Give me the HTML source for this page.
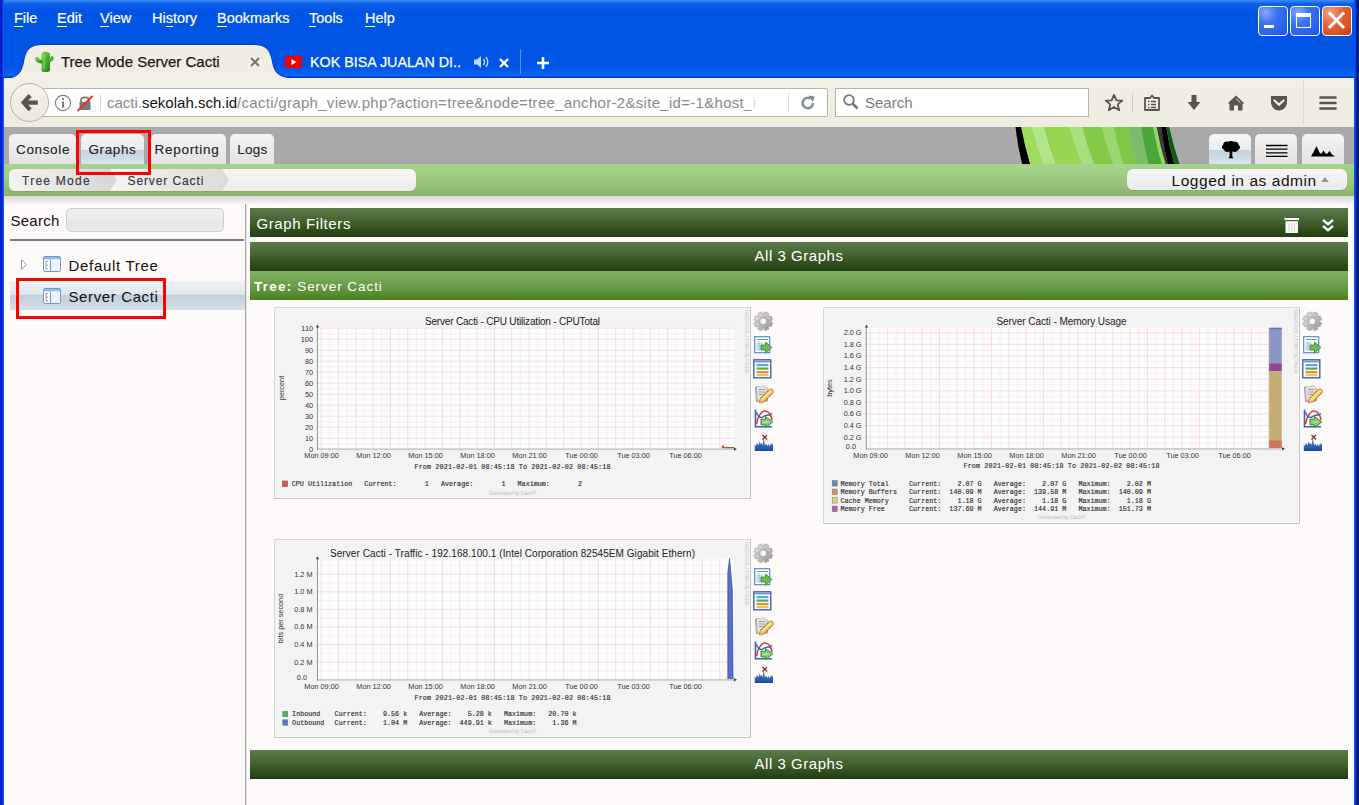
<!DOCTYPE html>
<html><head><meta charset="utf-8">
<style>
*{box-sizing:border-box}
html,body{margin:0;padding:0}
body{width:1359px;height:805px;overflow:hidden;position:relative;background:#0054e3;font-family:"Liberation Sans",sans-serif}
.a{position:absolute}
/* window frame */
#lb{left:0;top:0;width:4px;height:805px;background:linear-gradient(90deg,#0a1ccc 0,#0a1ecc 2px,#0a52e4 3px,#1a66f0 4px)}
#rb{left:1354px;top:0;width:5px;height:805px;background:linear-gradient(90deg,#1050f4 0,#0840ec 1.5px,#0020a8 2.5px,#001878 3.5px,#1a2a58 5px)}
#title{left:0;top:0;width:1359px;height:45px;background:linear-gradient(180deg,#3d8cf7 0,#0a5ee8 4px,#0054e3 12px,#0054e3 100%)}
.menu{top:8.5px;font-size:14.5px;color:#fff;line-height:18px;-webkit-text-stroke:0.2px #fff}
.menu u{text-decoration:none;border-bottom:1px solid #fff}
.wbtn{top:6px;width:30px;height:30px;border:1.5px solid #fff;border-radius:4px;background:radial-gradient(circle at 25% 20%,#88a8f8 0,#3c74f0 35%,#2a62ea 70%,#1c4fd8 100%)}
#tb{left:4px;top:78px;width:1350px;height:49px;background:linear-gradient(180deg,#f2f0e6 0,#eeece1 100%)}
#content{left:4px;top:127px;width:1350px;height:678px;background:#fdfaf9;overflow:hidden}
.ctab{top:134px;height:31px;border-radius:5px 5px 0 0;background:linear-gradient(180deg,#f3f3f3 0,#e9e9e9 60%,#e2e2e2 100%)}
.ctab.sel{background:linear-gradient(180deg,#f4f6f8 0,#e8edf1 50%,#c4d2dc 52%,#d8e4ee 100%)}
.ctt{top:141px;font-size:13.5px;line-height:18px;color:#222;-webkit-text-stroke:0.15px #333}
.bct{top:173px;font-size:12px;line-height:16px;color:#333;-webkit-text-stroke:0.15px #444}
.dbar{left:250px;width:1098px;background:linear-gradient(180deg,#5d7c4c 0,#3f5f2c 50%,#223e0f 100%)}
.btxt{left:250px;width:1098px;text-align:center;font-size:15px;line-height:18px;color:#fff;letter-spacing:0.54px}
.gt{font-family:"Liberation Sans",sans-serif;font-size:10px;fill:#222}
.gl{font-family:"Liberation Sans",sans-serif;font-size:7.3px;fill:#333}
.gm{font-family:"Liberation Mono",monospace;font-size:6.72px;fill:#222;stroke:#555;stroke-width:0.18px}
.gen{font-family:"Liberation Sans",sans-serif;font-size:5px;fill:#bdbdbd}
.rrd{font-family:"Liberation Sans",sans-serif;font-size:5px;fill:#c4c4c4}
.tabtxt{font-size:15px;line-height:18px;-webkit-text-stroke:0.25px currentColor}
</style></head>
<body>
<div id="title" class="a"></div>
<div class="a menu" style="left:14px"><u>F</u>ile</div>
<div class="a menu" style="left:57px"><u>E</u>dit</div>
<div class="a menu" style="left:100px"><u>V</u>iew</div>
<div class="a menu" style="left:152px">Hi<u>s</u>tory</div>
<div class="a menu" style="left:217px"><u>B</u>ookmarks</div>
<div class="a menu" style="left:309px"><u>T</u>ools</div>
<div class="a menu" style="left:365px"><u>H</u>elp</div>
<!-- window buttons -->
<div class="a wbtn" style="left:1258px"><div class="a" style="left:5px;top:18px;width:10px;height:3px;background:#fff"></div></div>
<div class="a wbtn" style="left:1290px"><div class="a" style="left:5px;top:6px;width:15px;height:15px;border:1.5px solid #fff;border-top-width:4px"></div></div>
<div class="a wbtn" style="left:1322px;background:radial-gradient(circle at 25% 20%,#f0a088 0,#e2643c 40%,#d6501c 75%,#b83c10 100%)">
<svg class="a" style="left:0;top:0" width="27" height="27" viewBox="0 0 27 27"><path d="M7 6.5 L20 20 M20 6.5 L7 20" stroke="#fff" stroke-width="3" stroke-linecap="square"/></svg></div>

<!-- tab strip: selected tab -->
<div class="a" style="left:4px;top:66px;width:1350px;height:12px;background:linear-gradient(180deg,#0054e3,#0a64f6 85%,#0038b0 92%,#0038b0 100%)"></div>
<svg class="a" style="left:4px;top:44px" width="300" height="35" viewBox="0 0 300 35">
<path d="M0 35 C14 35 18 28 20 18 C22 6 26 1 38 1 L250 1 C262 1 266 6 268 18 C270 28 274 34 290 34.5" fill="none" stroke="#0038b8" stroke-width="1.6"/><path d="M0 35 C14 35 18 28 20 18 C22 6 26 1 38 1 L250 1 C262 1 266 6 268 18 C270 28 274 34 290 34.5 L290 35 Z" fill="#f1efe5"/>
</svg>
<!-- cactus icon -->
<svg class="a" style="left:34px;top:51px" width="22" height="22" viewBox="0 0 22 22">
<defs><linearGradient id="cg" x1="0" x2="1" y1="0" y2="1"><stop offset="0" stop-color="#8ad84a"/><stop offset="0.6" stop-color="#3ea82a"/><stop offset="1" stop-color="#1f7a18"/></linearGradient></defs>
<path d="M7.5 19.5 L7.5 4 C7.5 1.2 9.5 0.8 11.5 0.8 C14 0.8 16 1.5 16 4.5 L16 19 C16 20.5 14 21 11.5 21 C9 21 7.5 20.8 7.5 19.5 Z" fill="url(#cg)"/>
<path d="M15 11 C17.5 11 19 9.5 19.5 8 C20 6 19 5 18 5 C17 5 16.5 6 16.2 7.2 L15 8 Z" fill="url(#cg)"/>
<path d="M8.5 12.5 C5.5 12.5 2.2 11.5 1.2 9 C0.5 7 1.8 5.5 3.2 5.8 C4.5 6 4.8 7.5 5.5 8.3 C6.2 9 7.2 9 8.5 9 Z" fill="url(#cg)"/>
<path d="M10 3 L10 18" stroke="#a8e878" stroke-width="1" opacity="0.7"/>
</svg>
<div class="a tabtxt" style="left:61px;top:53px;color:#1a1a1a">Tree Mode Server Cacti</div>
<svg class="a" style="left:249px;top:56px" width="12" height="12" viewBox="0 0 12 12"><path d="M2 2 L10 10 M10 2 L2 10" stroke="#7a7a70" stroke-width="2.2"/></svg>
<!-- youtube tab -->
<div class="a" style="left:285px;top:56px;width:17px;height:12px;background:#f20000;border-radius:3px"></div>
<svg class="a" style="left:285px;top:56px" width="17" height="12" viewBox="0 0 17 12"><path d="M6.5 3 L11.5 6 L6.5 9 Z" fill="#fff"/></svg>
<div class="a tabtxt" style="left:310px;top:53.3px;color:#fff;font-size:15px;transform:scaleX(0.953);transform-origin:0 0;white-space:nowrap">KOK BISA JUALAN DI..</div>
<svg class="a" style="left:473px;top:55px" width="17" height="14" viewBox="0 0 17 14"><path d="M1 4.5 L4 4.5 L8 1 L8 13 L4 9.5 L1 9.5 Z" fill="#c8d8f8"/><path d="M10.5 4 Q12.5 7 10.5 10 M13 2 Q16.5 7 13 12" stroke="#c8d8f8" stroke-width="1.4" fill="none"/></svg>
<svg class="a" style="left:498px;top:57px" width="12" height="12" viewBox="0 0 12 12"><path d="M2 2 L10 10 M10 2 L2 10" stroke="#fff" stroke-width="2.4"/></svg>
<div class="a" style="left:520px;top:49px;width:1px;height:25px;background:#5a90f0"></div>
<svg class="a" style="left:536px;top:56px" width="14" height="14" viewBox="0 0 14 14"><path d="M7 1 L7 13 M1 7 L13 7" stroke="#fff" stroke-width="2.6"/></svg>

<div id="tb" class="a"></div>
<!-- url bar -->
<div class="a" style="left:38px;top:88px;width:790px;height:29px;background:#fff;border:1px solid #b9b5a6;border-radius:0 2px 2px 0"></div>
<div class="a" style="left:10px;top:83px;width:39px;height:39px;border-radius:50%;background:linear-gradient(180deg,#f6f4ec,#ebe8dc);border:1px solid #b8b3a0"></div>
<svg class="a" style="left:18px;top:91px" width="22" height="22" viewBox="0 0 22 22"><path d="M3.2 11.5 L10.6 3.2 L13.4 5.9 L9.6 9.8 L19.5 9.8 L19.5 13.4 L9.6 13.4 L13.4 17.2 L10.6 20 Z" fill="#57554b" stroke="#57554b" stroke-width="0.6" stroke-linejoin="round"/></svg>
<svg class="a" style="left:54px;top:94px" width="18" height="18" viewBox="0 0 18 18"><circle cx="9" cy="9" r="7.6" fill="none" stroke="#7c7c7c" stroke-width="1.1"/><rect x="8.1" y="7.5" width="1.8" height="6" fill="#6a6a6a"/><rect x="8.1" y="4.2" width="1.8" height="1.8" fill="#6a6a6a"/></svg>
<svg class="a" style="left:76px;top:94px" width="18" height="18" viewBox="0 0 18 18"><path d="M5 8 L5 6 C5 2.5 13 2.5 13 6 L13 8" stroke="#7a7a7a" stroke-width="1.8" fill="none"/><rect x="3.5" y="8" width="11" height="8" fill="#7a7a7a"/><path d="M1.5 17 L16.5 2" stroke="#e8302a" stroke-width="1.8"/></svg>
<div class="a" style="left:100px;top:94px;width:1px;height:17px;background:#dcd8c8"></div>
<div class="a" style="left:107px;top:93px;width:651px;height:20px;overflow:hidden;white-space:nowrap;font-size:15px;line-height:20px;color:#8a8a8a"><span>cacti.</span><span style="color:#111">sekolah.sch.id</span><span style="letter-spacing:0.3px">/cacti/graph_view.php?action=tree&amp;node=tree_anchor-2&amp;site_id=-1&amp;host_id=-1</span></div>
<div class="a" style="left:748px;top:89px;width:10px;height:27px;background:linear-gradient(90deg,rgba(255,255,255,0),#fff)"></div>
<div class="a" style="left:788px;top:93px;width:1px;height:19px;background:#e4e0d0"></div>
<svg class="a" style="left:799px;top:94px" width="18" height="18" viewBox="0 0 18 18"><path d="M14 9 A5.2 5.2 0 1 1 11.5 4.6" stroke="#7f8a96" stroke-width="2.4" fill="none"/><path d="M9.5 1.5 L15.5 2.5 L14 8 Z" fill="#7f8a96"/></svg>
<!-- search -->
<div class="a" style="left:835px;top:88px;width:254px;height:29px;background:#fff;border:1px solid #b9b5a6"></div>
<svg class="a" style="left:842px;top:93px" width="18" height="18" viewBox="0 0 18 18"><circle cx="7" cy="7" r="4.8" stroke="#777" stroke-width="1.8" fill="none"/><path d="M10.5 10.5 L15.5 15.5" stroke="#777" stroke-width="2.6"/></svg>
<div class="a" style="left:865px;top:93px;font-size:15px;line-height:20px;color:#7a7a7a">Search</div>
<!-- toolbar icons -->
<svg class="a" style="left:1104px;top:93px" width="20" height="20" viewBox="0 0 20 20"><path d="M10 1.8 L12.4 7.3 L18.3 7.6 L13.7 11.4 L15.2 17.3 L10 14 L4.8 17.3 L6.3 11.4 L1.7 7.6 L7.6 7.3 Z" fill="none" stroke="#58564c" stroke-width="1.8" stroke-linejoin="round"/></svg>
<div class="a" style="left:1132px;top:93px;width:1px;height:19px;background:#cfcbb9"></div>
<svg class="a" style="left:1142px;top:93px" width="20" height="20" viewBox="0 0 20 20"><path d="M3 5 L8 5 L10 2.5 L12 5 L17 5 L17 17 L3 17 Z" fill="none" stroke="#58564c" stroke-width="1.8" stroke-linejoin="round"/><path d="M6 8.5 H7.5 M9 8.5 H14 M6 11.5 H7.5 M9 11.5 H14 M6 14.5 H7.5 M9 14.5 H14" stroke="#58564c" stroke-width="1.5"/></svg>
<svg class="a" style="left:1184px;top:93px" width="20" height="20" viewBox="0 0 20 20"><path d="M7.5 2 L12.5 2 L12.5 9 L16.5 9 L10 17 L3.5 9 L7.5 9 Z" fill="#58564c"/></svg>
<svg class="a" style="left:1226px;top:93px" width="20" height="20" viewBox="0 0 20 20"><path d="M10 2.5 L18.5 10.5 L16.5 10.5 L16.5 17.5 L12 17.5 L12 12.5 L8 12.5 L8 17.5 L3.5 17.5 L3.5 10.5 L1.5 10.5 Z" fill="#58564c"/><path d="M10 5.5 L14.5 9.8" stroke="#f0eee4" stroke-width="1"/></svg>
<svg class="a" style="left:1269px;top:93px" width="20" height="20" viewBox="0 0 20 20"><path d="M2 3 L18 3 L18 9 C18 14 14 17.5 10 17.5 C6 17.5 2 14 2 9 Z" fill="#58564c"/><path d="M5.5 7.5 L10 11.8 L14.5 7.5" stroke="#f0eee4" stroke-width="2.2" fill="none" stroke-linecap="round"/></svg>
<div class="a" style="left:1303px;top:81px;width:1px;height:44px;background:#dedacb"></div>
<svg class="a" style="left:1318px;top:93px" width="20" height="20" viewBox="0 0 20 20"><path d="M2.5 4.5 H17.5 M2.5 10 H17.5 M2.5 15.5 H17.5" stroke="#58564c" stroke-width="2.6" stroke-linecap="round"/></svg>
<div id="content" class="a"></div>
<!-- cacti header -->
<div class="a" style="left:4px;top:127px;width:1350px;height:38px;background:#a9a9a9"></div>
<div class="a ctab" style="left:9px;width:67px"></div>
<div class="a ctab sel" style="left:81px;width:63px"></div>
<div class="a ctab" style="left:151px;width:75px"></div>
<div class="a ctab" style="left:230px;width:44px"></div>
<div class="a ctt" style="left:16px;letter-spacing:0.65px">Console</div>
<div class="a ctt" style="left:88.5px;letter-spacing:0.62px">Graphs</div>
<div class="a ctt" style="left:154.5px;letter-spacing:0.72px">Reporting</div>
<div class="a ctt" style="left:237.3px;letter-spacing:0.25px">Logs</div>
<!-- logo -->
<svg class="a" style="left:1010px;top:127px" width="175" height="37" viewBox="0 0 175 37"><path d="M5.5 0 L11.3 0 Q14.6 18.5 20.2 37 L12.1 37 Q7.6 18.5 5.5 0 Z" fill="#000"/><path d="M11.3 0 L21.6 0 Q26.0 18.5 32.7 37 L20.2 37 Q14.6 18.5 11.3 0 Z" fill="#a0dc5c"/><path d="M21.6 0 L34.2 0 Q38.8 18.5 45.9 37 L32.7 37 Q26.0 18.5 21.6 0 Z" fill="#b2e58a"/><path d="M34.2 0 L59.2 0 Q64.2 18.5 71.7 37 L45.9 37 Q38.8 18.5 34.2 0 Z" fill="#95d54f"/><path d="M59.2 0 L72.4 0 Q77.1 18.5 84.2 37 L71.7 37 Q64.2 18.5 59.2 0 Z" fill="#aade7e"/><path d="M72.4 0 L91.5 0 Q96.2 18.5 103.3 37 L84.2 37 Q77.1 18.5 72.4 0 Z" fill="#86cb47"/><path d="M91.5 0 L104.1 0 Q107.6 18.5 113.6 37 L103.3 37 Q96.2 18.5 91.5 0 Z" fill="#9bd76e"/><path d="M104.1 0 L118.8 0 Q121.6 18.5 126.9 37 L113.6 37 Q107.6 18.5 104.1 0 Z" fill="#7fc747"/><path d="M118.8 0 L131.3 0 Q133.8 18.5 138.6 37 L126.9 37 Q121.6 18.5 118.8 0 Z" fill="#7bbb6b"/><path d="M131.3 0 L143.1 0 Q146.3 18.5 151.9 37 L138.6 37 Q133.8 18.5 131.3 0 Z" fill="#4aa63b"/><path d="M143.1 0 L146.7 0 Q149.9 18.5 155.6 37 L151.9 37 Q146.3 18.5 143.1 0 Z" fill="#8fda58"/><path d="M146.7 0 L151.1 0 Q153.3 18.5 157.8 37 L155.6 37 Q149.9 18.5 146.7 0 Z" fill="#3a3a3a"/><path d="M151.1 0 L156.3 0 Q159.1 18.5 164.4 37 L157.8 37 Q153.3 18.5 151.1 0 Z" fill="#000"/><path d="M156.3 0 L159.2 0 Q163.2 18.5 169.5 37 L164.4 37 Q159.1 18.5 156.3 0 Z" fill="#0e5e0e"/></svg>
<!-- view buttons -->
<div class="a ctab sel" style="left:1209px;width:42px"></div>
<div class="a ctab" style="left:1255px;width:42px"></div>
<div class="a ctab" style="left:1302px;width:42px"></div>
<svg class="a" style="left:1220px;top:140px" width="22" height="20" viewBox="0 0 22 20"><path d="M4 9.5 C1.5 9 1.2 6 3.2 5 C3 2.5 5.5 1 8 1.8 C9.5 0.6 12.5 0.6 14 1.8 C16.5 1.2 19 2.8 18.6 5 C20.6 6 20.5 9 18 9.8 C17.5 12 14.5 12.5 13 11.5 L12.3 11.5 L12.3 16.6 L13.6 18.2 L8.5 18.2 L9.6 16.6 L9.6 11.5 L9 11.5 C7.5 12.5 4.5 12 4 9.5 Z" fill="#000"/></svg>
<svg class="a" style="left:1265px;top:143px" width="24" height="16" viewBox="0 0 24 16"><path d="M1 2.5 H22.5 M1 6.2 H22.5 M1 9.8 H22.5 M1 13.4 H22.5" stroke="#000" stroke-width="1.3"/></svg>
<svg class="a" style="left:1310px;top:144px" width="26" height="14" viewBox="0 0 26 14"><path d="M1 12.5 L3.5 8 L6.5 2 L9.5 8.5 L11 10 L13.5 6.5 L16 10 L17.5 9.5 L19.5 7 L22 10.5 L25 12.5 Z" fill="#000"/></svg>
<!-- green bar -->
<div class="a" style="left:4px;top:164px;width:1350px;height:32px;background:linear-gradient(180deg,#a6d48c 0,#9bc97e 50%,#8fb36c 100%)"></div>
<div class="a" style="left:4px;top:196px;width:1350px;height:9px;background:linear-gradient(180deg,#d8d8d8,#fdfaf9)"></div>
<!-- breadcrumb -->
<div class="a" style="left:9px;top:169px;width:407px;height:22px;border-radius:6px;background:linear-gradient(180deg,#f6f6f6,#ececec);box-shadow:0 1px 0 #8aa86a"></div>
<svg class="a" style="left:9px;top:169px" width="230" height="22" viewBox="0 0 230 22">
<defs><linearGradient id="bc1" x1="0" x2="1" y1="0" y2="0"><stop offset="0" stop-color="#f4f4f4"/><stop offset="1" stop-color="#d6d6d6"/></linearGradient>
<linearGradient id="bc2" x1="0" x2="1" y1="0" y2="0"><stop offset="0" stop-color="#f4f4f4"/><stop offset="1" stop-color="#dadada"/></linearGradient></defs>
<path d="M6 0 L101 0 L108 11 L101 22 L6 22 A6 6 0 0 1 0 16 L0 6 A6 6 0 0 1 6 0 Z" fill="url(#bc1)"/>
<path d="M101 0 L213 0 L220 11 L213 22 L101 22 L108 11 Z" fill="url(#bc2)"/>
</svg>
<div class="a bct" style="left:22px;letter-spacing:1.25px">Tree Mode</div>
<div class="a bct" style="left:127.5px;letter-spacing:0.9px">Server Cacti</div>
<!-- logged in -->
<div class="a" style="left:1127px;top:169px;width:220px;height:21px;border-radius:6px;background:linear-gradient(180deg,#f6f6f6,#ebebeb);box-shadow:0 1px 0 #8aa86a"></div>
<div class="a" style="left:1171.5px;top:171.5px;font-size:15.5px;line-height:18px;color:#111;letter-spacing:0.55px">Logged in as admin</div>
<svg class="a" style="left:1320px;top:175px" width="10" height="8" viewBox="0 0 10 8"><path d="M1 7 L5 2 L9 7 Z" fill="#9a9a9a"/></svg>
<!-- red box around Graphs -->
<div class="a" style="left:76px;top:130px;width:75px;height:45px;border:3px solid #f00"></div>

<!-- sidebar -->
<div class="a" style="left:10.5px;top:211.8px;font-size:15px;line-height:18px;color:#111;letter-spacing:0.24px">Search</div>
<div class="a" style="left:66px;top:208px;width:158px;height:24px;border:1px solid #cfcfcf;border-radius:5px;background:linear-gradient(180deg,#f0f0f0 0,#ececec 50%,#e6e6e6 51%,#eaeaea 100%)"></div>
<div class="a" style="left:10px;top:239px;width:234px;height:2px;background:#7c7c7c"></div>
<div class="a" style="left:245px;top:204px;width:2px;height:601px;background:linear-gradient(90deg,#a8a8a8 0,#a8a8a8 50%,#e4e2e2 50%)"></div>
<svg class="a" style="left:20px;top:258px" width="8" height="13" viewBox="0 0 8 13"><path d="M1.5 1.5 L6.5 6.5 L1.5 11.5 Z" fill="none" stroke="#9a9a9a" stroke-width="1"/></svg>
<div class="a" style="left:10px;top:281px;width:235px;height:29px;background:linear-gradient(180deg,#eef2f5 0,#dfe7ec 46%,#c2d0da 49%,#d4dfe7 100%)"></div>
<svg class="a" style="left:43px;top:256px" width="18" height="16" viewBox="0 0 18 16"><rect x="0.5" y="0.5" width="17" height="15" rx="1.5" fill="#fff" stroke="#6f98d0"/><rect x="1" y="1" width="16" height="2.5" fill="#9ab8e4"/><rect x="8.5" y="3.5" width="8" height="11.5" fill="#eef2f8"/><path d="M7.5 3.5 V15" stroke="#6f98d0" stroke-width="1.2"/><path d="M3 5 V13.5 M3 5.5 H5 M3 9 H5 M3 13 H5" stroke="#8a8a8a" stroke-width="0.8"/></svg>
<svg class="a" style="left:43px;top:288px" width="18" height="16" viewBox="0 0 18 16"><rect x="0.5" y="0.5" width="17" height="15" rx="1.5" fill="#fff" stroke="#6f98d0"/><rect x="1" y="1" width="16" height="2.5" fill="#9ab8e4"/><rect x="8.5" y="3.5" width="8" height="11.5" fill="#eef2f8"/><path d="M7.5 3.5 V15" stroke="#6f98d0" stroke-width="1.2"/><path d="M3 5 V13.5 M3 5.5 H5 M3 9 H5 M3 13 H5" stroke="#8a8a8a" stroke-width="0.8"/></svg>
<div class="a" style="left:68.5px;top:256.8px;font-size:15px;line-height:18px;color:#111;letter-spacing:0.69px">Default Tree</div>
<div class="a" style="left:68.5px;top:287.8px;font-size:15px;line-height:18px;color:#111;letter-spacing:0.62px">Server Cacti</div>
<div class="a" style="left:16px;top:278px;width:150px;height:41px;border:3px solid #f00"></div>

<!-- content bars -->
<div class="a dbar" style="top:208px;height:29px"></div>
<div class="a" style="left:256.5px;top:215px;font-size:15px;line-height:18px;color:#fff;letter-spacing:0.6px">Graph Filters</div>
<svg class="a" style="left:1284px;top:217px" width="16" height="18" viewBox="0 0 16 18"><rect x="0.5" y="1" width="14.5" height="2" fill="#fff"/><path d="M1.5 4.2 H14 V16 H1.5 Z" fill="#fff"/><path d="M5 6 V14.5 M7.8 6 V14.5 M10.6 6 V14.5" stroke="#d8d0c0" stroke-width="1.1"/></svg>
<svg class="a" style="left:1320px;top:217px" width="16" height="17" viewBox="0 0 16 17"><path d="M3 3 L8 7.2 L13 3 M3 9 L8 13.2 L13 9" stroke="#fff" stroke-width="2.3" fill="none"/></svg>
<div class="a dbar" style="top:242px;height:29px"></div>
<div class="a btxt" style="top:247px">All 3 Graphs</div>
<div class="a" style="left:250px;top:271px;width:1098px;height:29px;background:linear-gradient(180deg,#85b266 0,#6a9e48 50%,#4a7f1e 100%)"></div>
<div class="a" style="left:254px;top:278.5px;font-size:13.5px;line-height:16px;color:#fff;letter-spacing:0.94px;white-space:pre"><b style="letter-spacing:1.25px">Tree:</b> Server Cacti</div>
<div class="a dbar" style="top:750px;height:29px"></div>
<div class="a btxt" style="top:755px">All 3 Graphs</div>

<!--GRAPHS--><svg class="a" style="left:274px;top:307px" width="477" height="192" viewBox="0 0 477 192"><rect x="0" y="0" width="477" height="192" fill="#f3f3f3"/><path d="M0.5 192 V0.5 H477" stroke="#d6d6d6" stroke-width="1" fill="none"/><path d="M476.5 0 V191.5 H0" stroke="#c4c4c4" stroke-width="1" fill="none"/><path d="M475.5 1 V190.5 H1" stroke="#fcfcfc" stroke-width="1" fill="none"/><rect x="43.5" y="20.3" width="416.5" height="121.89999999999999" fill="#fdfdfd"/><path d="M55.77 20.3 V142.2" stroke="#ebebeb" stroke-width="0.6"/><path d="M73.09 20.3 V142.2" stroke="#ebebeb" stroke-width="0.6"/><path d="M90.42 20.3 V142.2" stroke="#ebebeb" stroke-width="0.6"/><path d="M107.75 20.3 V142.2" stroke="#ebebeb" stroke-width="0.6"/><path d="M125.08 20.3 V142.2" stroke="#ebebeb" stroke-width="0.6"/><path d="M142.41 20.3 V142.2" stroke="#ebebeb" stroke-width="0.6"/><path d="M159.75 20.3 V142.2" stroke="#ebebeb" stroke-width="0.6"/><path d="M177.07 20.3 V142.2" stroke="#ebebeb" stroke-width="0.6"/><path d="M194.40 20.3 V142.2" stroke="#ebebeb" stroke-width="0.6"/><path d="M211.73 20.3 V142.2" stroke="#ebebeb" stroke-width="0.6"/><path d="M229.06 20.3 V142.2" stroke="#ebebeb" stroke-width="0.6"/><path d="M246.39 20.3 V142.2" stroke="#ebebeb" stroke-width="0.6"/><path d="M263.72 20.3 V142.2" stroke="#ebebeb" stroke-width="0.6"/><path d="M281.05 20.3 V142.2" stroke="#ebebeb" stroke-width="0.6"/><path d="M298.38 20.3 V142.2" stroke="#ebebeb" stroke-width="0.6"/><path d="M315.71 20.3 V142.2" stroke="#ebebeb" stroke-width="0.6"/><path d="M333.04 20.3 V142.2" stroke="#ebebeb" stroke-width="0.6"/><path d="M350.37 20.3 V142.2" stroke="#ebebeb" stroke-width="0.6"/><path d="M367.70 20.3 V142.2" stroke="#ebebeb" stroke-width="0.6"/><path d="M385.03 20.3 V142.2" stroke="#ebebeb" stroke-width="0.6"/><path d="M402.36 20.3 V142.2" stroke="#ebebeb" stroke-width="0.6"/><path d="M419.69 20.3 V142.2" stroke="#ebebeb" stroke-width="0.6"/><path d="M437.02 20.3 V142.2" stroke="#ebebeb" stroke-width="0.6"/><path d="M454.35 20.3 V142.2" stroke="#ebebeb" stroke-width="0.6"/><path d="M43.5 136.70 H460" stroke="#ebebeb" stroke-width="0.6"/><path d="M43.5 125.70 H460" stroke="#ebebeb" stroke-width="0.6"/><path d="M43.5 114.70 H460" stroke="#ebebeb" stroke-width="0.6"/><path d="M43.5 103.70 H460" stroke="#ebebeb" stroke-width="0.6"/><path d="M43.5 92.70 H460" stroke="#ebebeb" stroke-width="0.6"/><path d="M43.5 81.70 H460" stroke="#ebebeb" stroke-width="0.6"/><path d="M43.5 70.70 H460" stroke="#ebebeb" stroke-width="0.6"/><path d="M43.5 59.70 H460" stroke="#ebebeb" stroke-width="0.6"/><path d="M43.5 48.70 H460" stroke="#ebebeb" stroke-width="0.6"/><path d="M43.5 37.70 H460" stroke="#ebebeb" stroke-width="0.6"/><path d="M43.5 26.70 H460" stroke="#ebebeb" stroke-width="0.6"/><path d="M47.10 20.3 V144.2" stroke="#f7d2d2" stroke-width="0.8"/><path d="M64.43 20.3 V144.2" stroke="#f7d2d2" stroke-width="0.8"/><path d="M81.76 20.3 V144.2" stroke="#f7d2d2" stroke-width="0.8"/><path d="M99.09 20.3 V144.2" stroke="#f7d2d2" stroke-width="0.8"/><path d="M116.42 20.3 V144.2" stroke="#f7d2d2" stroke-width="0.8"/><path d="M133.75 20.3 V144.2" stroke="#f7d2d2" stroke-width="0.8"/><path d="M151.08 20.3 V144.2" stroke="#f7d2d2" stroke-width="0.8"/><path d="M168.41 20.3 V144.2" stroke="#f7d2d2" stroke-width="0.8"/><path d="M185.74 20.3 V144.2" stroke="#f7d2d2" stroke-width="0.8"/><path d="M203.07 20.3 V144.2" stroke="#f7d2d2" stroke-width="0.8"/><path d="M220.40 20.3 V144.2" stroke="#f7d2d2" stroke-width="0.8"/><path d="M237.73 20.3 V144.2" stroke="#f7d2d2" stroke-width="0.8"/><path d="M255.06 20.3 V144.2" stroke="#f7d2d2" stroke-width="0.8"/><path d="M272.39 20.3 V144.2" stroke="#f7d2d2" stroke-width="0.8"/><path d="M289.72 20.3 V144.2" stroke="#f7d2d2" stroke-width="0.8"/><path d="M307.05 20.3 V144.2" stroke="#f7d2d2" stroke-width="0.8"/><path d="M324.38 20.3 V144.2" stroke="#f7d2d2" stroke-width="0.8"/><path d="M341.71 20.3 V144.2" stroke="#f7d2d2" stroke-width="0.8"/><path d="M359.04 20.3 V144.2" stroke="#f7d2d2" stroke-width="0.8"/><path d="M376.37 20.3 V144.2" stroke="#f7d2d2" stroke-width="0.8"/><path d="M393.70 20.3 V144.2" stroke="#f7d2d2" stroke-width="0.8"/><path d="M411.03 20.3 V144.2" stroke="#f7d2d2" stroke-width="0.8"/><path d="M428.36 20.3 V144.2" stroke="#f7d2d2" stroke-width="0.8"/><path d="M445.69 20.3 V144.2" stroke="#f7d2d2" stroke-width="0.8"/><path d="M41.5 131.20 H460" stroke="#f7d2d2" stroke-width="0.8"/><path d="M41.5 120.20 H460" stroke="#f7d2d2" stroke-width="0.8"/><path d="M41.5 109.20 H460" stroke="#f7d2d2" stroke-width="0.8"/><path d="M41.5 98.20 H460" stroke="#f7d2d2" stroke-width="0.8"/><path d="M41.5 87.20 H460" stroke="#f7d2d2" stroke-width="0.8"/><path d="M41.5 76.20 H460" stroke="#f7d2d2" stroke-width="0.8"/><path d="M41.5 65.20 H460" stroke="#f7d2d2" stroke-width="0.8"/><path d="M41.5 54.20 H460" stroke="#f7d2d2" stroke-width="0.8"/><path d="M41.5 43.20 H460" stroke="#f7d2d2" stroke-width="0.8"/><path d="M41.5 32.20 H460" stroke="#f7d2d2" stroke-width="0.8"/><path d="M41.5 21.20 H460" stroke="#f7d2d2" stroke-width="0.8"/><path d="M448 140.7 L449 139.2 L450 140.89999999999998 H460" stroke="#e0403c" stroke-width="1.6" fill="none"/><path d="M43.5 142.2 H461" stroke="#c9cdcd" stroke-width="1.8"/><path d="M43.5 143.2 V19.5" stroke="#6a8880" stroke-width="0.8"/><path d="M41.9 20.5 L43.5 17.5 L45.1 20.5 Z" fill="#1f4f3a"/><path d="M460 140.6 L463 142.2 L460 143.79999999999998 Z" fill="#1f4f3a"/><text x="238.5" y="17.5" text-anchor="middle" class="gt" textLength="175">Server Cacti - CPU Utilization - CPUTotal</text><text x="39" y="144.50" text-anchor="end" class="gl">0</text><text x="39" y="133.50" text-anchor="end" class="gl">10</text><text x="39" y="122.50" text-anchor="end" class="gl">20</text><text x="39" y="111.50" text-anchor="end" class="gl">30</text><text x="39" y="100.50" text-anchor="end" class="gl">40</text><text x="39" y="89.50" text-anchor="end" class="gl">50</text><text x="39" y="78.50" text-anchor="end" class="gl">60</text><text x="39" y="67.50" text-anchor="end" class="gl">70</text><text x="39" y="56.50" text-anchor="end" class="gl">80</text><text x="39" y="45.50" text-anchor="end" class="gl">90</text><text x="39" y="34.50" text-anchor="end" class="gl">100</text><text x="39" y="23.50" text-anchor="end" class="gl">110</text><text transform="translate(9.5 81) rotate(-90)" text-anchor="middle" class="gl">percent</text><text x="47.60" y="151.3" text-anchor="middle" class="gl">Mon 09:00</text><text x="99.59" y="151.3" text-anchor="middle" class="gl">Mon 12:00</text><text x="151.58" y="151.3" text-anchor="middle" class="gl">Mon 15:00</text><text x="203.57" y="151.3" text-anchor="middle" class="gl">Mon 18:00</text><text x="255.56" y="151.3" text-anchor="middle" class="gl">Mon 21:00</text><text x="307.55" y="151.3" text-anchor="middle" class="gl">Tue 00:00</text><text x="359.54" y="151.3" text-anchor="middle" class="gl">Tue 03:00</text><text x="411.53" y="151.3" text-anchor="middle" class="gl">Tue 06:00</text><text x="238.5" y="162.3" text-anchor="middle" class="gm" textLength="196">From 2021-02-01 08:45:18 To 2021-02-02 08:45:18</text><rect x="8.5" y="174" width="5" height="5.5" fill="#e05050" stroke="#a04040" stroke-width="0.6"/><text x="17.8" y="179.3" class="gm" xml:space="preserve">CPU Utilization   Current:       1   Average:       1   Maximum:       2</text><text x="238.5" y="188" text-anchor="middle" class="gen">Generated by Cacti®</text><text transform="translate(470.5 3) rotate(90)" class="rrd">RRDTOOL / TOBI OETIKER</text></svg><svg class="a" style="left:753px;top:311px" width="21" height="21" viewBox="0 0 21 21"><defs><linearGradient id="gg753311" x1="0" y1="0" x2="1" y2="1"><stop offset="0" stop-color="#e4e4e4"/><stop offset="0.5" stop-color="#c2c2c2"/><stop offset="1" stop-color="#8c8c8c"/></linearGradient></defs><polygon points="16.70,10.13 19.76,11.95 18.15,15.82 14.70,14.95 14.95,14.70 15.82,18.15 11.95,19.76 10.13,16.70 10.47,16.70 8.65,19.76 4.78,18.15 5.65,14.70 5.90,14.95 2.45,15.82 0.84,11.95 3.90,10.13 3.90,10.47 0.84,8.65 2.45,4.78 5.90,5.65 5.65,5.90 4.78,2.45 8.65,0.84 10.47,3.90 10.13,3.90 11.95,0.84 15.82,2.45 14.95,5.90 14.70,5.65 18.15,4.78 19.76,8.65 16.70,10.47" fill="url(#gg753311)" stroke="#9a9a9a" stroke-width="0.6"/><circle cx="10.3" cy="10.3" r="4.3" fill="none" stroke="#a8a8a8" stroke-width="1"/><circle cx="10.3" cy="10.3" r="2.6" fill="#fbf9f8"/></svg><svg class="a" style="left:754px;top:336px" width="19" height="19" viewBox="0 0 19 19"><rect x="0.7" y="0.7" width="15" height="16" fill="#fff" stroke="#5a8ad0" stroke-width="1.2"/><path d="M3 3.5 H14" stroke="#60b060" stroke-width="1"/><rect x="2.5" y="5.5" width="6" height="9" fill="#dce8f6"/><path d="M2.5 8 H9 M2.5 10.5 H9 M2.5 13 H9 M5 5.5 V15" stroke="#9ab4d8" stroke-width="0.6"/><path d="M7 9 H11.5 V6 L18 11.5 L11.5 17 V14 H7 Z" fill="#6cbc50" stroke="#2e8a2a" stroke-width="0.8"/></svg><svg class="a" style="left:753px;top:359px" width="19" height="20" viewBox="0 0 19 20"><rect x="0.8" y="0.8" width="17" height="18" fill="#fff" stroke="#3e64a8" stroke-width="1.4"/><rect x="1.5" y="1.5" width="15.6" height="2" fill="#7a9ad0"/><rect x="3.5" y="5" width="12" height="2.2" fill="#58a8e8"/><rect x="3.5" y="8.5" width="12" height="2.2" fill="#5aa850"/><rect x="3.5" y="12" width="12" height="2.2" fill="#f08a30"/><rect x="3.5" y="15" width="12" height="2.2" fill="#e8c850"/></svg><svg class="a" style="left:754px;top:384px" width="20" height="20" viewBox="0 0 20 20"><path d="M1.5 3 L10.5 2 L13 4 L13.5 17 L2.5 17.5 Z" fill="#c4c4c4" stroke="#8a8a8a" stroke-width="0.8"/><path d="M3 2.5 L11 2 L12.5 3.5 L12.8 15 L3.5 15.5 Z" fill="#e2e2e2"/><path d="M5 5.5 H11 M5 8 H11 M5 10.5 H10" stroke="#9a9a9a" stroke-width="0.9"/><path d="M6.5 14.5 L15.5 5.5 C16.5 4.5 18.5 5 19 6.5 C19.5 7.5 19 8.5 18.5 9 L9.5 18 L5.5 19 Z" fill="#f2dc6a" stroke="#c8883a" stroke-width="1.1" stroke-linejoin="round"/><path d="M7.5 15.5 L16.5 6.5" stroke="#fff2a8" stroke-width="1"/><path d="M5.5 19 L6.5 14.5 L9.5 18 Z" fill="#e8b080"/></svg><svg class="a" style="left:754px;top:408px" width="20" height="21" viewBox="0 0 20 21"><path d="M1.5 1.5 V18.8 H18" stroke="#3a62c0" stroke-width="1.6" fill="none"/><path d="M2.5 16 C4 8 7.5 2.8 11 3 C14.5 3.2 17 6.5 18 12" stroke="#e83a3a" stroke-width="1.6" fill="none"/><path d="M2.2 4 C3.5 7 5 10 7.5 9.5 C10 9 12 6.5 14.5 7 C16 7.3 17 6.5 18 5.5" stroke="#3a62c0" stroke-width="1.4" fill="none"/><path d="M7 11.2 H11.5 V8.5 L18.8 14 L11.5 19.5 V16.8 H7 Z" fill="#8cc878" stroke="#2f8a2a" stroke-width="1" stroke-linejoin="round"/><path d="M8.5 14 H15.5" stroke="#c0e4b0" stroke-width="1"/></svg><svg class="a" style="left:754px;top:434px" width="20" height="18" viewBox="0 0 20 18"><defs><linearGradient id="rt753311" x1="0" y1="0" x2="0" y2="1"><stop offset="0" stop-color="#4a8ae0"/><stop offset="1" stop-color="#1a4a9a"/></linearGradient></defs><path d="M0.8 17 V10.5 L2 12 L3 8.5 L4.2 11.5 L5.5 7.5 L6.5 10 L7.5 9 L8.5 11 L9.8 4 L11 11.5 L12 9.5 L13.5 12 L14.5 10 L16 12.5 L17 9 L18.5 11 L19 8.5 V17 Z" fill="url(#rt753311)"/><path d="M8.5 1 L13 5.5 M13 1 L8.5 5.5" stroke="#8a2a2a" stroke-width="1.3"/></svg><svg class="a" style="left:823px;top:307px" width="477" height="217" viewBox="0 0 477 217"><rect x="0" y="0" width="477" height="217" fill="#f3f3f3"/><path d="M0.5 217 V0.5 H477" stroke="#d6d6d6" stroke-width="1" fill="none"/><path d="M476.5 0 V216.5 H0" stroke="#c4c4c4" stroke-width="1" fill="none"/><path d="M475.5 1 V215.5 H1" stroke="#fcfcfc" stroke-width="1" fill="none"/><rect x="43.4" y="21" width="415.6" height="120.80000000000001" fill="#fdfdfd"/><path d="M55.77 21 V141.8" stroke="#ebebeb" stroke-width="0.6"/><path d="M73.09 21 V141.8" stroke="#ebebeb" stroke-width="0.6"/><path d="M90.42 21 V141.8" stroke="#ebebeb" stroke-width="0.6"/><path d="M107.75 21 V141.8" stroke="#ebebeb" stroke-width="0.6"/><path d="M125.08 21 V141.8" stroke="#ebebeb" stroke-width="0.6"/><path d="M142.41 21 V141.8" stroke="#ebebeb" stroke-width="0.6"/><path d="M159.75 21 V141.8" stroke="#ebebeb" stroke-width="0.6"/><path d="M177.07 21 V141.8" stroke="#ebebeb" stroke-width="0.6"/><path d="M194.40 21 V141.8" stroke="#ebebeb" stroke-width="0.6"/><path d="M211.73 21 V141.8" stroke="#ebebeb" stroke-width="0.6"/><path d="M229.06 21 V141.8" stroke="#ebebeb" stroke-width="0.6"/><path d="M246.39 21 V141.8" stroke="#ebebeb" stroke-width="0.6"/><path d="M263.72 21 V141.8" stroke="#ebebeb" stroke-width="0.6"/><path d="M281.05 21 V141.8" stroke="#ebebeb" stroke-width="0.6"/><path d="M298.38 21 V141.8" stroke="#ebebeb" stroke-width="0.6"/><path d="M315.71 21 V141.8" stroke="#ebebeb" stroke-width="0.6"/><path d="M333.04 21 V141.8" stroke="#ebebeb" stroke-width="0.6"/><path d="M350.37 21 V141.8" stroke="#ebebeb" stroke-width="0.6"/><path d="M367.70 21 V141.8" stroke="#ebebeb" stroke-width="0.6"/><path d="M385.03 21 V141.8" stroke="#ebebeb" stroke-width="0.6"/><path d="M402.36 21 V141.8" stroke="#ebebeb" stroke-width="0.6"/><path d="M419.69 21 V141.8" stroke="#ebebeb" stroke-width="0.6"/><path d="M437.02 21 V141.8" stroke="#ebebeb" stroke-width="0.6"/><path d="M454.35 21 V141.8" stroke="#ebebeb" stroke-width="0.6"/><path d="M43.4 136.00 H459" stroke="#ebebeb" stroke-width="0.6"/><path d="M43.4 124.40 H459" stroke="#ebebeb" stroke-width="0.6"/><path d="M43.4 112.80 H459" stroke="#ebebeb" stroke-width="0.6"/><path d="M43.4 101.20 H459" stroke="#ebebeb" stroke-width="0.6"/><path d="M43.4 89.60 H459" stroke="#ebebeb" stroke-width="0.6"/><path d="M43.4 78.00 H459" stroke="#ebebeb" stroke-width="0.6"/><path d="M43.4 66.40 H459" stroke="#ebebeb" stroke-width="0.6"/><path d="M43.4 54.80 H459" stroke="#ebebeb" stroke-width="0.6"/><path d="M43.4 43.20 H459" stroke="#ebebeb" stroke-width="0.6"/><path d="M43.4 31.60 H459" stroke="#ebebeb" stroke-width="0.6"/><path d="M47.10 21 V143.8" stroke="#f7d2d2" stroke-width="0.8"/><path d="M64.43 21 V143.8" stroke="#f7d2d2" stroke-width="0.8"/><path d="M81.76 21 V143.8" stroke="#f7d2d2" stroke-width="0.8"/><path d="M99.09 21 V143.8" stroke="#f7d2d2" stroke-width="0.8"/><path d="M116.42 21 V143.8" stroke="#f7d2d2" stroke-width="0.8"/><path d="M133.75 21 V143.8" stroke="#f7d2d2" stroke-width="0.8"/><path d="M151.08 21 V143.8" stroke="#f7d2d2" stroke-width="0.8"/><path d="M168.41 21 V143.8" stroke="#f7d2d2" stroke-width="0.8"/><path d="M185.74 21 V143.8" stroke="#f7d2d2" stroke-width="0.8"/><path d="M203.07 21 V143.8" stroke="#f7d2d2" stroke-width="0.8"/><path d="M220.40 21 V143.8" stroke="#f7d2d2" stroke-width="0.8"/><path d="M237.73 21 V143.8" stroke="#f7d2d2" stroke-width="0.8"/><path d="M255.06 21 V143.8" stroke="#f7d2d2" stroke-width="0.8"/><path d="M272.39 21 V143.8" stroke="#f7d2d2" stroke-width="0.8"/><path d="M289.72 21 V143.8" stroke="#f7d2d2" stroke-width="0.8"/><path d="M307.05 21 V143.8" stroke="#f7d2d2" stroke-width="0.8"/><path d="M324.38 21 V143.8" stroke="#f7d2d2" stroke-width="0.8"/><path d="M341.71 21 V143.8" stroke="#f7d2d2" stroke-width="0.8"/><path d="M359.04 21 V143.8" stroke="#f7d2d2" stroke-width="0.8"/><path d="M376.37 21 V143.8" stroke="#f7d2d2" stroke-width="0.8"/><path d="M393.70 21 V143.8" stroke="#f7d2d2" stroke-width="0.8"/><path d="M411.03 21 V143.8" stroke="#f7d2d2" stroke-width="0.8"/><path d="M428.36 21 V143.8" stroke="#f7d2d2" stroke-width="0.8"/><path d="M445.69 21 V143.8" stroke="#f7d2d2" stroke-width="0.8"/><path d="M41.4 130.20 H459" stroke="#f7d2d2" stroke-width="0.8"/><path d="M41.4 118.60 H459" stroke="#f7d2d2" stroke-width="0.8"/><path d="M41.4 107.00 H459" stroke="#f7d2d2" stroke-width="0.8"/><path d="M41.4 95.40 H459" stroke="#f7d2d2" stroke-width="0.8"/><path d="M41.4 83.80 H459" stroke="#f7d2d2" stroke-width="0.8"/><path d="M41.4 72.20 H459" stroke="#f7d2d2" stroke-width="0.8"/><path d="M41.4 60.60 H459" stroke="#f7d2d2" stroke-width="0.8"/><path d="M41.4 49.00 H459" stroke="#f7d2d2" stroke-width="0.8"/><path d="M41.4 37.40 H459" stroke="#f7d2d2" stroke-width="0.8"/><path d="M41.4 25.80 H459" stroke="#f7d2d2" stroke-width="0.8"/><rect x="446.1" y="20.8" width="12.7" height="35.4" fill="#8a96c4"/><rect x="446.1" y="20.8" width="12.7" height="1.4" fill="#6a74b0"/><rect x="446.1" y="56.2" width="12.7" height="8" fill="#94448e"/><rect x="446.1" y="64.2" width="12.7" height="69" fill="#c4ae78"/><rect x="446.1" y="133.2" width="12.7" height="8.6" fill="#c87860"/><path d="M43.4 141.8 H460" stroke="#c9cdcd" stroke-width="1.8"/><path d="M43.4 142.8 V19.5" stroke="#6a8880" stroke-width="0.8"/><path d="M41.8 20.5 L43.4 17.5 L45.0 20.5 Z" fill="#1f4f3a"/><path d="M459 140.20000000000002 L462 141.8 L459 143.4 Z" fill="#1f4f3a"/><text x="238.5" y="17.5" text-anchor="middle" class="gt" textLength="130">Server Cacti - Memory Usage</text><text x="33" y="142.30" text-anchor="end" class="gl">0.0</text><text x="38.5" y="132.50" text-anchor="end" class="gl">0.2 G</text><text x="38.5" y="120.90" text-anchor="end" class="gl">0.4 G</text><text x="38.5" y="109.30" text-anchor="end" class="gl">0.6 G</text><text x="38.5" y="97.70" text-anchor="end" class="gl">0.8 G</text><text x="38.5" y="86.10" text-anchor="end" class="gl">1.0 G</text><text x="38.5" y="74.50" text-anchor="end" class="gl">1.2 G</text><text x="38.5" y="62.90" text-anchor="end" class="gl">1.4 G</text><text x="38.5" y="51.30" text-anchor="end" class="gl">1.6 G</text><text x="38.5" y="39.70" text-anchor="end" class="gl">1.8 G</text><text x="38.5" y="28.10" text-anchor="end" class="gl">2.0 G</text><text transform="translate(9 81) rotate(-90)" text-anchor="middle" class="gl">bytes</text><text x="47.60" y="151" text-anchor="middle" class="gl">Mon 09:00</text><text x="99.59" y="151" text-anchor="middle" class="gl">Mon 12:00</text><text x="151.58" y="151" text-anchor="middle" class="gl">Mon 15:00</text><text x="203.57" y="151" text-anchor="middle" class="gl">Mon 18:00</text><text x="255.56" y="151" text-anchor="middle" class="gl">Mon 21:00</text><text x="307.55" y="151" text-anchor="middle" class="gl">Tue 00:00</text><text x="359.54" y="151" text-anchor="middle" class="gl">Tue 03:00</text><text x="411.53" y="151" text-anchor="middle" class="gl">Tue 06:00</text><text x="238.5" y="161.3" text-anchor="middle" class="gm" textLength="196">From 2021-02-01 08:45:18 To 2021-02-02 08:45:18</text><rect x="9.2" y="173.6" width="5" height="5.5" fill="#6a84b4" stroke="#707070" stroke-width="0.5"/><text x="17.5" y="178.6" class="gm" xml:space="preserve">Memory Total     Current:    2.07 G   Average:    2.07 G   Maximum:    2.02 M</text><rect x="9.2" y="182.1" width="5" height="5.5" fill="#e0905c" stroke="#707070" stroke-width="0.5"/><text x="17.5" y="187.1" class="gm" xml:space="preserve">Memory Buffers   Current:  140.09 M   Average:  139.58 M   Maximum:  140.09 M</text><rect x="9.2" y="190.6" width="5" height="5.5" fill="#e8d070" stroke="#707070" stroke-width="0.5"/><text x="17.5" y="195.6" class="gm" xml:space="preserve">Cache Memory     Current:    1.18 G   Average:    1.18 G   Maximum:    1.18 G</text><rect x="9.2" y="199.1" width="5" height="5.5" fill="#b060a8" stroke="#707070" stroke-width="0.5"/><text x="17.5" y="204.1" class="gm" xml:space="preserve">Memory Free      Current:  137.69 M   Average:  144.91 M   Maximum:  151.73 M</text><text x="238.5" y="212" text-anchor="middle" class="gen">Generated by Cacti®</text><text transform="translate(470.5 3) rotate(90)" class="rrd">RRDTOOL / TOBI OETIKER</text></svg><svg class="a" style="left:1302px;top:311px" width="21" height="21" viewBox="0 0 21 21"><defs><linearGradient id="gg1302311" x1="0" y1="0" x2="1" y2="1"><stop offset="0" stop-color="#e4e4e4"/><stop offset="0.5" stop-color="#c2c2c2"/><stop offset="1" stop-color="#8c8c8c"/></linearGradient></defs><polygon points="16.70,10.13 19.76,11.95 18.15,15.82 14.70,14.95 14.95,14.70 15.82,18.15 11.95,19.76 10.13,16.70 10.47,16.70 8.65,19.76 4.78,18.15 5.65,14.70 5.90,14.95 2.45,15.82 0.84,11.95 3.90,10.13 3.90,10.47 0.84,8.65 2.45,4.78 5.90,5.65 5.65,5.90 4.78,2.45 8.65,0.84 10.47,3.90 10.13,3.90 11.95,0.84 15.82,2.45 14.95,5.90 14.70,5.65 18.15,4.78 19.76,8.65 16.70,10.47" fill="url(#gg1302311)" stroke="#9a9a9a" stroke-width="0.6"/><circle cx="10.3" cy="10.3" r="4.3" fill="none" stroke="#a8a8a8" stroke-width="1"/><circle cx="10.3" cy="10.3" r="2.6" fill="#fbf9f8"/></svg><svg class="a" style="left:1303px;top:336px" width="19" height="19" viewBox="0 0 19 19"><rect x="0.7" y="0.7" width="15" height="16" fill="#fff" stroke="#5a8ad0" stroke-width="1.2"/><path d="M3 3.5 H14" stroke="#60b060" stroke-width="1"/><rect x="2.5" y="5.5" width="6" height="9" fill="#dce8f6"/><path d="M2.5 8 H9 M2.5 10.5 H9 M2.5 13 H9 M5 5.5 V15" stroke="#9ab4d8" stroke-width="0.6"/><path d="M7 9 H11.5 V6 L18 11.5 L11.5 17 V14 H7 Z" fill="#6cbc50" stroke="#2e8a2a" stroke-width="0.8"/></svg><svg class="a" style="left:1302px;top:359px" width="19" height="20" viewBox="0 0 19 20"><rect x="0.8" y="0.8" width="17" height="18" fill="#fff" stroke="#3e64a8" stroke-width="1.4"/><rect x="1.5" y="1.5" width="15.6" height="2" fill="#7a9ad0"/><rect x="3.5" y="5" width="12" height="2.2" fill="#58a8e8"/><rect x="3.5" y="8.5" width="12" height="2.2" fill="#5aa850"/><rect x="3.5" y="12" width="12" height="2.2" fill="#f08a30"/><rect x="3.5" y="15" width="12" height="2.2" fill="#e8c850"/></svg><svg class="a" style="left:1303px;top:384px" width="20" height="20" viewBox="0 0 20 20"><path d="M1.5 3 L10.5 2 L13 4 L13.5 17 L2.5 17.5 Z" fill="#c4c4c4" stroke="#8a8a8a" stroke-width="0.8"/><path d="M3 2.5 L11 2 L12.5 3.5 L12.8 15 L3.5 15.5 Z" fill="#e2e2e2"/><path d="M5 5.5 H11 M5 8 H11 M5 10.5 H10" stroke="#9a9a9a" stroke-width="0.9"/><path d="M6.5 14.5 L15.5 5.5 C16.5 4.5 18.5 5 19 6.5 C19.5 7.5 19 8.5 18.5 9 L9.5 18 L5.5 19 Z" fill="#f2dc6a" stroke="#c8883a" stroke-width="1.1" stroke-linejoin="round"/><path d="M7.5 15.5 L16.5 6.5" stroke="#fff2a8" stroke-width="1"/><path d="M5.5 19 L6.5 14.5 L9.5 18 Z" fill="#e8b080"/></svg><svg class="a" style="left:1303px;top:408px" width="20" height="21" viewBox="0 0 20 21"><path d="M1.5 1.5 V18.8 H18" stroke="#3a62c0" stroke-width="1.6" fill="none"/><path d="M2.5 16 C4 8 7.5 2.8 11 3 C14.5 3.2 17 6.5 18 12" stroke="#e83a3a" stroke-width="1.6" fill="none"/><path d="M2.2 4 C3.5 7 5 10 7.5 9.5 C10 9 12 6.5 14.5 7 C16 7.3 17 6.5 18 5.5" stroke="#3a62c0" stroke-width="1.4" fill="none"/><path d="M7 11.2 H11.5 V8.5 L18.8 14 L11.5 19.5 V16.8 H7 Z" fill="#8cc878" stroke="#2f8a2a" stroke-width="1" stroke-linejoin="round"/><path d="M8.5 14 H15.5" stroke="#c0e4b0" stroke-width="1"/></svg><svg class="a" style="left:1303px;top:434px" width="20" height="18" viewBox="0 0 20 18"><defs><linearGradient id="rt1302311" x1="0" y1="0" x2="0" y2="1"><stop offset="0" stop-color="#4a8ae0"/><stop offset="1" stop-color="#1a4a9a"/></linearGradient></defs><path d="M0.8 17 V10.5 L2 12 L3 8.5 L4.2 11.5 L5.5 7.5 L6.5 10 L7.5 9 L8.5 11 L9.8 4 L11 11.5 L12 9.5 L13.5 12 L14.5 10 L16 12.5 L17 9 L18.5 11 L19 8.5 V17 Z" fill="url(#rt1302311)"/><path d="M8.5 1 L13 5.5 M13 1 L8.5 5.5" stroke="#8a2a2a" stroke-width="1.3"/></svg><svg class="a" style="left:274px;top:539px" width="477" height="199" viewBox="0 0 477 199"><rect x="0" y="0" width="477" height="199" fill="#f3f3f3"/><path d="M0.5 199 V0.5 H477" stroke="#d6d6d6" stroke-width="1" fill="none"/><path d="M476.5 0 V198.5 H0" stroke="#c4c4c4" stroke-width="1" fill="none"/><path d="M475.5 1 V197.5 H1" stroke="#fcfcfc" stroke-width="1" fill="none"/><rect x="43.5" y="20.3" width="416.5" height="120.50000000000001" fill="#fdfdfd"/><path d="M55.77 20.3 V140.8" stroke="#ebebeb" stroke-width="0.6"/><path d="M73.09 20.3 V140.8" stroke="#ebebeb" stroke-width="0.6"/><path d="M90.42 20.3 V140.8" stroke="#ebebeb" stroke-width="0.6"/><path d="M107.75 20.3 V140.8" stroke="#ebebeb" stroke-width="0.6"/><path d="M125.08 20.3 V140.8" stroke="#ebebeb" stroke-width="0.6"/><path d="M142.41 20.3 V140.8" stroke="#ebebeb" stroke-width="0.6"/><path d="M159.75 20.3 V140.8" stroke="#ebebeb" stroke-width="0.6"/><path d="M177.07 20.3 V140.8" stroke="#ebebeb" stroke-width="0.6"/><path d="M194.40 20.3 V140.8" stroke="#ebebeb" stroke-width="0.6"/><path d="M211.73 20.3 V140.8" stroke="#ebebeb" stroke-width="0.6"/><path d="M229.06 20.3 V140.8" stroke="#ebebeb" stroke-width="0.6"/><path d="M246.39 20.3 V140.8" stroke="#ebebeb" stroke-width="0.6"/><path d="M263.72 20.3 V140.8" stroke="#ebebeb" stroke-width="0.6"/><path d="M281.05 20.3 V140.8" stroke="#ebebeb" stroke-width="0.6"/><path d="M298.38 20.3 V140.8" stroke="#ebebeb" stroke-width="0.6"/><path d="M315.71 20.3 V140.8" stroke="#ebebeb" stroke-width="0.6"/><path d="M333.04 20.3 V140.8" stroke="#ebebeb" stroke-width="0.6"/><path d="M350.37 20.3 V140.8" stroke="#ebebeb" stroke-width="0.6"/><path d="M367.70 20.3 V140.8" stroke="#ebebeb" stroke-width="0.6"/><path d="M385.03 20.3 V140.8" stroke="#ebebeb" stroke-width="0.6"/><path d="M402.36 20.3 V140.8" stroke="#ebebeb" stroke-width="0.6"/><path d="M419.69 20.3 V140.8" stroke="#ebebeb" stroke-width="0.6"/><path d="M437.02 20.3 V140.8" stroke="#ebebeb" stroke-width="0.6"/><path d="M454.35 20.3 V140.8" stroke="#ebebeb" stroke-width="0.6"/><path d="M43.5 132.00 H460" stroke="#ebebeb" stroke-width="0.6"/><path d="M43.5 114.40 H460" stroke="#ebebeb" stroke-width="0.6"/><path d="M43.5 96.80 H460" stroke="#ebebeb" stroke-width="0.6"/><path d="M43.5 79.20 H460" stroke="#ebebeb" stroke-width="0.6"/><path d="M43.5 61.60 H460" stroke="#ebebeb" stroke-width="0.6"/><path d="M43.5 44.00 H460" stroke="#ebebeb" stroke-width="0.6"/><path d="M43.5 26.40 H460" stroke="#ebebeb" stroke-width="0.6"/><path d="M47.10 20.3 V142.8" stroke="#f7d2d2" stroke-width="0.8"/><path d="M64.43 20.3 V142.8" stroke="#f7d2d2" stroke-width="0.8"/><path d="M81.76 20.3 V142.8" stroke="#f7d2d2" stroke-width="0.8"/><path d="M99.09 20.3 V142.8" stroke="#f7d2d2" stroke-width="0.8"/><path d="M116.42 20.3 V142.8" stroke="#f7d2d2" stroke-width="0.8"/><path d="M133.75 20.3 V142.8" stroke="#f7d2d2" stroke-width="0.8"/><path d="M151.08 20.3 V142.8" stroke="#f7d2d2" stroke-width="0.8"/><path d="M168.41 20.3 V142.8" stroke="#f7d2d2" stroke-width="0.8"/><path d="M185.74 20.3 V142.8" stroke="#f7d2d2" stroke-width="0.8"/><path d="M203.07 20.3 V142.8" stroke="#f7d2d2" stroke-width="0.8"/><path d="M220.40 20.3 V142.8" stroke="#f7d2d2" stroke-width="0.8"/><path d="M237.73 20.3 V142.8" stroke="#f7d2d2" stroke-width="0.8"/><path d="M255.06 20.3 V142.8" stroke="#f7d2d2" stroke-width="0.8"/><path d="M272.39 20.3 V142.8" stroke="#f7d2d2" stroke-width="0.8"/><path d="M289.72 20.3 V142.8" stroke="#f7d2d2" stroke-width="0.8"/><path d="M307.05 20.3 V142.8" stroke="#f7d2d2" stroke-width="0.8"/><path d="M324.38 20.3 V142.8" stroke="#f7d2d2" stroke-width="0.8"/><path d="M341.71 20.3 V142.8" stroke="#f7d2d2" stroke-width="0.8"/><path d="M359.04 20.3 V142.8" stroke="#f7d2d2" stroke-width="0.8"/><path d="M376.37 20.3 V142.8" stroke="#f7d2d2" stroke-width="0.8"/><path d="M393.70 20.3 V142.8" stroke="#f7d2d2" stroke-width="0.8"/><path d="M411.03 20.3 V142.8" stroke="#f7d2d2" stroke-width="0.8"/><path d="M428.36 20.3 V142.8" stroke="#f7d2d2" stroke-width="0.8"/><path d="M445.69 20.3 V142.8" stroke="#f7d2d2" stroke-width="0.8"/><path d="M41.5 123.20 H460" stroke="#f7d2d2" stroke-width="0.8"/><path d="M41.5 105.60 H460" stroke="#f7d2d2" stroke-width="0.8"/><path d="M41.5 88.00 H460" stroke="#f7d2d2" stroke-width="0.8"/><path d="M41.5 70.40 H460" stroke="#f7d2d2" stroke-width="0.8"/><path d="M41.5 52.80 H460" stroke="#f7d2d2" stroke-width="0.8"/><path d="M41.5 35.20 H460" stroke="#f7d2d2" stroke-width="0.8"/><path d="M453.7 140.8 V33.5 L455.6 19.5 L458.3 50 L459.2 140.8 Z" fill="#5a70c4"/><path d="M453.9 140.8 V33.5 L455.6 19.5 L458.3 50 L459 140.8" stroke="#3c50a8" stroke-width="0.7" fill="none"/><path d="M453 140.3 H459" stroke="#20a040" stroke-width="1.2"/><path d="M43.5 140.8 H461" stroke="#c9cdcd" stroke-width="1.8"/><path d="M43.5 141.8 V19.2" stroke="#6a8880" stroke-width="0.8"/><path d="M41.9 20.2 L43.5 17.2 L45.1 20.2 Z" fill="#1f4f3a"/><path d="M460 139.20000000000002 L463 140.8 L460 142.4 Z" fill="#1f4f3a"/><text x="238.5" y="17.8" text-anchor="middle" class="gt" textLength="365">Server Cacti - Traffic - 192.168.100.1 (Intel Corporation 82545EM Gigabit Ethern)</text><text x="33" y="141.30" text-anchor="end" class="gl">0.0</text><text x="38.5" y="125.50" text-anchor="end" class="gl">0.2 M</text><text x="38.5" y="107.90" text-anchor="end" class="gl">0.4 M</text><text x="38.5" y="90.30" text-anchor="end" class="gl">0.6 M</text><text x="38.5" y="72.70" text-anchor="end" class="gl">0.8 M</text><text x="38.5" y="55.10" text-anchor="end" class="gl">1.0 M</text><text x="38.5" y="37.50" text-anchor="end" class="gl">1.2 M</text><text transform="translate(8.8 79.5) rotate(-90)" text-anchor="middle" class="gl">bits per second</text><text x="47.60" y="150.3" text-anchor="middle" class="gl">Mon 09:00</text><text x="99.59" y="150.3" text-anchor="middle" class="gl">Mon 12:00</text><text x="151.58" y="150.3" text-anchor="middle" class="gl">Mon 15:00</text><text x="203.57" y="150.3" text-anchor="middle" class="gl">Mon 18:00</text><text x="255.56" y="150.3" text-anchor="middle" class="gl">Mon 21:00</text><text x="307.55" y="150.3" text-anchor="middle" class="gl">Tue 00:00</text><text x="359.54" y="150.3" text-anchor="middle" class="gl">Tue 03:00</text><text x="411.53" y="150.3" text-anchor="middle" class="gl">Tue 06:00</text><text x="238.5" y="160.5" text-anchor="middle" class="gm" textLength="196">From 2021-02-01 08:45:18 To 2021-02-02 08:45:18</text><rect x="8.8" y="172.3" width="5" height="5.5" fill="#40c040" stroke="#707070" stroke-width="0.5"/><text x="18.1" y="177.3" class="gm">Inbound</text><text x="60.6" y="177.3" class="gm" xml:space="preserve">Current:    9.56 k   Average:    5.28 k   Maximum:   20.70 k</text><rect x="8.8" y="180.8" width="5" height="5.5" fill="#5a74c0" stroke="#707070" stroke-width="0.5"/><text x="18.1" y="185.8" class="gm">Outbound</text><text x="60.6" y="185.8" class="gm" xml:space="preserve">Current:    1.04 M   Average:  449.91 k   Maximum:    1.36 M</text><text x="238.5" y="194" text-anchor="middle" class="gen">Generated by Cacti®</text><text transform="translate(470.5 3) rotate(90)" class="rrd">RRDTOOL / TOBI OETIKER</text></svg><svg class="a" style="left:753px;top:543px" width="21" height="21" viewBox="0 0 21 21"><defs><linearGradient id="gg753543" x1="0" y1="0" x2="1" y2="1"><stop offset="0" stop-color="#e4e4e4"/><stop offset="0.5" stop-color="#c2c2c2"/><stop offset="1" stop-color="#8c8c8c"/></linearGradient></defs><polygon points="16.70,10.13 19.76,11.95 18.15,15.82 14.70,14.95 14.95,14.70 15.82,18.15 11.95,19.76 10.13,16.70 10.47,16.70 8.65,19.76 4.78,18.15 5.65,14.70 5.90,14.95 2.45,15.82 0.84,11.95 3.90,10.13 3.90,10.47 0.84,8.65 2.45,4.78 5.90,5.65 5.65,5.90 4.78,2.45 8.65,0.84 10.47,3.90 10.13,3.90 11.95,0.84 15.82,2.45 14.95,5.90 14.70,5.65 18.15,4.78 19.76,8.65 16.70,10.47" fill="url(#gg753543)" stroke="#9a9a9a" stroke-width="0.6"/><circle cx="10.3" cy="10.3" r="4.3" fill="none" stroke="#a8a8a8" stroke-width="1"/><circle cx="10.3" cy="10.3" r="2.6" fill="#fbf9f8"/></svg><svg class="a" style="left:754px;top:568px" width="19" height="19" viewBox="0 0 19 19"><rect x="0.7" y="0.7" width="15" height="16" fill="#fff" stroke="#5a8ad0" stroke-width="1.2"/><path d="M3 3.5 H14" stroke="#60b060" stroke-width="1"/><rect x="2.5" y="5.5" width="6" height="9" fill="#dce8f6"/><path d="M2.5 8 H9 M2.5 10.5 H9 M2.5 13 H9 M5 5.5 V15" stroke="#9ab4d8" stroke-width="0.6"/><path d="M7 9 H11.5 V6 L18 11.5 L11.5 17 V14 H7 Z" fill="#6cbc50" stroke="#2e8a2a" stroke-width="0.8"/></svg><svg class="a" style="left:753px;top:591px" width="19" height="20" viewBox="0 0 19 20"><rect x="0.8" y="0.8" width="17" height="18" fill="#fff" stroke="#3e64a8" stroke-width="1.4"/><rect x="1.5" y="1.5" width="15.6" height="2" fill="#7a9ad0"/><rect x="3.5" y="5" width="12" height="2.2" fill="#58a8e8"/><rect x="3.5" y="8.5" width="12" height="2.2" fill="#5aa850"/><rect x="3.5" y="12" width="12" height="2.2" fill="#f08a30"/><rect x="3.5" y="15" width="12" height="2.2" fill="#e8c850"/></svg><svg class="a" style="left:754px;top:616px" width="20" height="20" viewBox="0 0 20 20"><path d="M1.5 3 L10.5 2 L13 4 L13.5 17 L2.5 17.5 Z" fill="#c4c4c4" stroke="#8a8a8a" stroke-width="0.8"/><path d="M3 2.5 L11 2 L12.5 3.5 L12.8 15 L3.5 15.5 Z" fill="#e2e2e2"/><path d="M5 5.5 H11 M5 8 H11 M5 10.5 H10" stroke="#9a9a9a" stroke-width="0.9"/><path d="M6.5 14.5 L15.5 5.5 C16.5 4.5 18.5 5 19 6.5 C19.5 7.5 19 8.5 18.5 9 L9.5 18 L5.5 19 Z" fill="#f2dc6a" stroke="#c8883a" stroke-width="1.1" stroke-linejoin="round"/><path d="M7.5 15.5 L16.5 6.5" stroke="#fff2a8" stroke-width="1"/><path d="M5.5 19 L6.5 14.5 L9.5 18 Z" fill="#e8b080"/></svg><svg class="a" style="left:754px;top:640px" width="20" height="21" viewBox="0 0 20 21"><path d="M1.5 1.5 V18.8 H18" stroke="#3a62c0" stroke-width="1.6" fill="none"/><path d="M2.5 16 C4 8 7.5 2.8 11 3 C14.5 3.2 17 6.5 18 12" stroke="#e83a3a" stroke-width="1.6" fill="none"/><path d="M2.2 4 C3.5 7 5 10 7.5 9.5 C10 9 12 6.5 14.5 7 C16 7.3 17 6.5 18 5.5" stroke="#3a62c0" stroke-width="1.4" fill="none"/><path d="M7 11.2 H11.5 V8.5 L18.8 14 L11.5 19.5 V16.8 H7 Z" fill="#8cc878" stroke="#2f8a2a" stroke-width="1" stroke-linejoin="round"/><path d="M8.5 14 H15.5" stroke="#c0e4b0" stroke-width="1"/></svg><svg class="a" style="left:754px;top:666px" width="20" height="18" viewBox="0 0 20 18"><defs><linearGradient id="rt753543" x1="0" y1="0" x2="0" y2="1"><stop offset="0" stop-color="#4a8ae0"/><stop offset="1" stop-color="#1a4a9a"/></linearGradient></defs><path d="M0.8 17 V10.5 L2 12 L3 8.5 L4.2 11.5 L5.5 7.5 L6.5 10 L7.5 9 L8.5 11 L9.8 4 L11 11.5 L12 9.5 L13.5 12 L14.5 10 L16 12.5 L17 9 L18.5 11 L19 8.5 V17 Z" fill="url(#rt753543)"/><path d="M8.5 1 L13 5.5 M13 1 L8.5 5.5" stroke="#8a2a2a" stroke-width="1.3"/></svg><!--/GRAPHS-->
<div id="lb" class="a"></div>
<div id="rb" class="a"></div>
</body></html>
